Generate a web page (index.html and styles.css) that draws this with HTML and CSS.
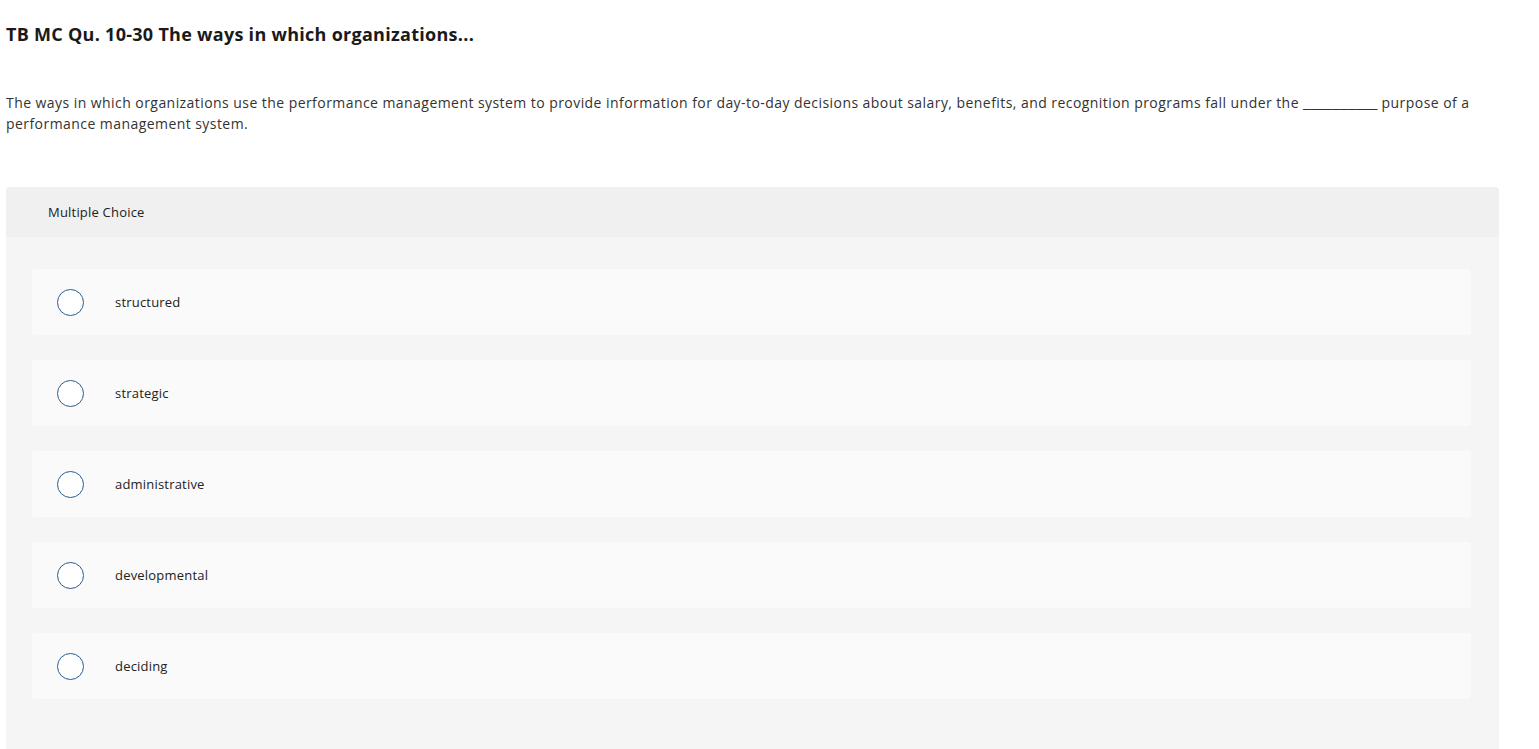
FILE: index.html
```html
<!DOCTYPE html>
<html>
<head>
  <title>TB MC Qu. 10-30</title>
  <link rel="stylesheet" href="styles.css">
</head>
<body>
  <div class="question">
    <h1 class="question-title">TB MC Qu. 10-30 The ways in which organizations...</h1>

    <p class="prompt">The ways in which organizations use the performance management system to provide information for day-to-day decisions about salary, benefits, and recognition programs fall under the <span class="blank">__________</span> purpose of a performance management system.</p>

    <div class="choice-card">
      <div class="choice-header">Multiple Choice</div>
      <div class="choice-list">
        <label class="choice">
          <span class="radio"></span>
          <span class="choice-text">structured</span>
        </label>
        <label class="choice">
          <span class="radio"></span>
          <span class="choice-text">strategic</span>
        </label>
        <label class="choice">
          <span class="radio"></span>
          <span class="choice-text">administrative</span>
        </label>
        <label class="choice">
          <span class="radio"></span>
          <span class="choice-text">developmental</span>
        </label>
        <label class="choice">
          <span class="radio"></span>
          <span class="choice-text">deciding</span>
        </label>
      </div>
    </div>
  </div>
</body>
</html>
```

FILE: styles.css
```css
body {
  font-family: "Open Sans", Arial, sans-serif;
  color: #222;
  margin: 0;
  background: #fff;
}
.question {
  padding: 0 40px 0 6px;
}
.question-title {
  font-size: 18px;
  font-weight: 700;
  letter-spacing: 0.28px;
  margin: 0;
  padding-top: 23px;
  line-height: 22px;
  color: #1a1a1a;
}
.prompt {
  font-size: 14px;
  line-height: 21px;
  letter-spacing: 0.44px;
  margin: 47px 0 0 0;
  color: #333;
}
.blank {
  font-size: 17px;
  line-height: 16px;
  letter-spacing: 0;
}
.choice-card {
  margin-top: 53px;
  background: #f5f5f5;
  border-radius: 4px 4px 0 0;
  padding-bottom: 50px;
}
.choice-header {
  background: #f0f0f0;
  height: 50px;
  display: flex;
  align-items: center;
  padding-left: 42px;
  font-size: 13px;
  letter-spacing: 0.2px;
  color: #222;
  border-radius: 4px 4px 0 0;
}
.choice-list {
  display: flex;
  flex-direction: column;
  gap: 25px;
  padding: 32px 28px 0 26px;
}
.choice {
  display: flex;
  align-items: center;
  height: 66px;
  background: #fafafa;
  border-radius: 4px;
  padding-left: 25px;
}
.radio {
  width: 25px;
  height: 25px;
  border: 1.5px solid #2c5b8f;
  border-radius: 50%;
  background: #fff;
  flex-shrink: 0;
}
.choice-text {
  margin-left: 31px;
  font-size: 13px;
  letter-spacing: 0.2px;
  color: #222;
}
```
